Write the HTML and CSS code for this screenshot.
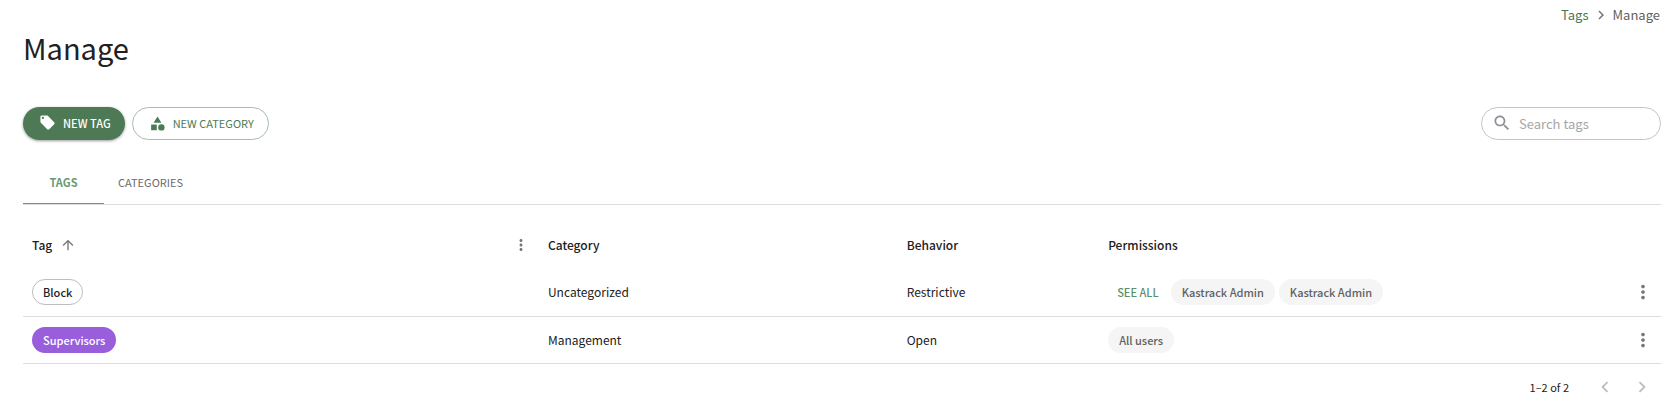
FILE: index.html
```
<!DOCTYPE html>
<html lang="en">
<head>
    <meta charset="UTF-8">
    <meta name="viewport" content="width=device-width, initial-scale=1.0">
    <title>Manage Tags</title>
    <link rel="stylesheet" href="styles.css">
</head>
<body>
    <div class="page">
        <nav class="breadcrumbs" aria-label="Breadcrumb">
            <a href="#tags">Tags</a>
            <svg class="icon icon-crumb" viewBox="0 0 24 24"><path d="M10 6 8.59 7.41 13.17 12l-4.58 4.59L10 18l6-6z"/></svg>
            <span>Manage</span>
        </nav>
        <h1>Manage</h1>

        <div class="toolbar">
            <button type="button" class="btn btn-primary">
                <svg class="icon" viewBox="0 0 24 24"><path d="m21.41 11.58-9-9C12.05 2.22 11.55 2 11 2H4c-1.1 0-2 .9-2 2v7c0 .55.22 1.05.59 1.42l9 9c.36.36.86.58 1.41.58s1.05-.22 1.41-.59l7-7c.37-.36.59-.86.59-1.41s-.23-1.06-.59-1.42M5.5 7C4.67 7 4 6.33 4 5.5S4.67 4 5.5 4 7 4.67 7 5.5 6.33 7 5.5 7"/></svg>
                NEW TAG
            </button>
            <button type="button" class="btn btn-outlined">
                <svg class="icon" viewBox="0 0 24 24"><path d="m12 2-5.5 9h11z"/><circle cx="17.5" cy="17.5" r="4.5"/><path d="M3 13.5h8v8H3z"/></svg>
                NEW CATEGORY
            </button>
            <label class="search">
                <svg class="icon icon-search" viewBox="0 0 24 24"><path d="M15.5 14h-.79l-.28-.27C15.41 12.59 16 11.11 16 9.5 16 5.91 13.09 3 9.5 3S3 5.91 3 9.5 5.91 16 9.5 16c1.61 0 3.09-.59 4.23-1.57l.27.28v.79l5 4.99L20.49 19zm-6 0C7.01 14 5 11.99 5 9.5S7.01 5 9.5 5 14 7.01 14 9.5 11.99 14 9.5 14"/></svg>
                <input type="text" placeholder="Search tags" aria-label="Search tags">
            </label>
        </div>

        <div class="tabs" role="tablist">
            <button type="button" class="tab active" role="tab" aria-selected="true">TAGS</button>
            <button type="button" class="tab" role="tab" aria-selected="false">CATEGORIES</button>
        </div>

        <table class="tags-table">
            <colgroup>
                <col class="col-tag">
                <col class="col-category">
                <col class="col-behavior">
                <col>
                <col class="col-actions">
            </colgroup>
            <thead>
                <tr>
                    <th>
                        <div class="th-sort">
                            <span>Tag</span>
                            <svg class="icon icon-sort" viewBox="0 0 24 24"><path d="m4 12 1.41 1.41L11 7.83V20h2V7.83l5.58 5.59L20 12l-8-8z"/></svg>
                            <button type="button" class="icon-btn th-menu" aria-label="Column menu">
                                <svg class="icon icon-column" viewBox="0 0 24 24"><path d="M12 8c1.1 0 2-.9 2-2s-.9-2-2-2-2 .9-2 2 .9 2 2 2m0 2c-1.1 0-2 .9-2 2s.9 2 2 2 2-.9 2-2-.9-2-2-2m0 6c-1.1 0-2 .9-2 2s.9 2 2 2 2-.9 2-2-.9-2-2-2"/></svg>
                            </button>
                        </div>
                    </th>
                    <th>Category</th>
                    <th>Behavior</th>
                    <th>Permissions</th>
                    <th></th>
                </tr>
            </thead>
            <tbody>
                <tr>
                    <td><div class="chips"><span class="chip chip-outlined">Block</span></div></td>
                    <td>Uncategorized</td>
                    <td>Restrictive</td>
                    <td>
                        <div class="chips">
                            <button type="button" class="see-all">SEE ALL</button>
                            <span class="chip">Kastrack Admin</span>
                            <span class="chip">Kastrack Admin</span>
                        </div>
                    </td>
                    <td>
                        <button type="button" class="icon-btn" aria-label="Row actions">
                            <svg class="icon icon-row" viewBox="0 0 24 24"><path d="M12 8c1.1 0 2-.9 2-2s-.9-2-2-2-2 .9-2 2 .9 2 2 2m0 2c-1.1 0-2 .9-2 2s.9 2 2 2 2-.9 2-2-.9-2-2-2m0 6c-1.1 0-2 .9-2 2s.9 2 2 2 2-.9 2-2-.9-2-2-2"/></svg>
                        </button>
                    </td>
                </tr>
                <tr>
                    <td><div class="chips"><span class="chip chip-purple">Supervisors</span></div></td>
                    <td>Management</td>
                    <td>Open</td>
                    <td><div class="chips"><span class="chip">All users</span></div></td>
                    <td>
                        <button type="button" class="icon-btn" aria-label="Row actions">
                            <svg class="icon icon-row" viewBox="0 0 24 24"><path d="M12 8c1.1 0 2-.9 2-2s-.9-2-2-2-2 .9-2 2 .9 2 2 2m0 2c-1.1 0-2 .9-2 2s.9 2 2 2 2-.9 2-2-.9-2-2-2m0 6c-1.1 0-2 .9-2 2s.9 2 2 2 2-.9 2-2-.9-2-2-2"/></svg>
                        </button>
                    </td>
                </tr>
            </tbody>
        </table>

        <div class="pagination">
            <span class="range">1–2 of 2</span>
            <button type="button" class="icon-btn page-btn" aria-label="Previous page" disabled>
                <svg class="icon icon-page" viewBox="0 0 24 24"><path d="M15.41 7.41 14 6l-6 6 6 6 1.41-1.41L10.83 12z"/></svg>
            </button>
            <button type="button" class="icon-btn page-btn" aria-label="Next page" disabled>
                <svg class="icon icon-page" viewBox="0 0 24 24"><path d="M10 6 8.59 7.41 13.17 12l-4.58 4.59L10 18l6-6z"/></svg>
            </button>
        </div>
    </div>
</body>
</html>
```
FILE: styles.css
```
* {
    box-sizing: border-box;
}
body {
    margin: 0;
    background: #fff;
    color: #212121;
    font-family: "Noto Sans CJK SC", "Noto Sans", sans-serif;
    font-size: 12px;
    line-height: 20px;
}
button, input {
    font-family: inherit;
}
button {
    padding: 0;
    border: 0;
    background: none;
    cursor: pointer;
}
.page {
    padding: 5px 15px 0 23px;
}
.icon {
    display: block;
    flex: none;
    fill: currentColor;
}
.breadcrumbs {
    display: flex;
    justify-content: flex-end;
    align-items: center;
    gap: 3px;
    padding-right: 1px;
    color: #616161;
    font-size: 13px;
}
.breadcrumbs a {
    color: #4b7652;
    text-decoration: none;
}
.icon-crumb {
    width: 18px;
    height: 18px;
    color: #757575;
}
h1 {
    margin: 1px 0 39px;
    font-size: 29px;
    font-weight: 400;
    line-height: 42px;
}

.toolbar {
    display: flex;
    align-items: center;
    gap: 7px;
}
.btn {
    display: flex;
    align-items: center;
    gap: 7px;
    height: 33px;
    border-radius: 17px;
    font-size: 11px;
}
.btn .icon {
    width: 17px;
    height: 17px;
}
.btn-primary {
    padding: 0 14px 2px 16px;
    background: #4d7a54;
    color: #fff;
    font-weight: 500;
    box-shadow: 0 1px 3px rgba(0, 0, 0, 0.4);
}
.btn-outlined {
    padding: 0 14px 1px 16px;
    border: 1px solid #a6bda9;
    color: #4d7a54;
}
.search {
    display: flex;
    align-items: center;
    gap: 7px;
    width: 180px;
    height: 33px;
    margin-left: auto;
    padding: 0 10px 1px;
    border: 1px solid #c4c4c4;
    border-radius: 17px;
    color: #8c9096;
}
.search input {
    width: 100%;
    min-width: 0;
    padding: 0;
    border: 0;
    outline: 0;
    background: none;
    font-size: 13px;
}
.search input::placeholder {
    color: #a6a6a6;
    opacity: 1;
}
.icon-search {
    width: 20px;
    height: 20px;
}

.tabs {
    display: flex;
    margin-top: 22px;
    border-bottom: 1px solid #dedede;
}
.tab {
    height: 42px;
    padding: 0 14px 1px;
    border-bottom: 1px solid transparent;
    color: #6b6b6b;
    font-size: 11px;
}
.tab.active {
    min-width: 81px;
    border-color: #6a9a73;
    color: #6a9a73;
    font-weight: 700;
}

.tags-table {
    width: 100%;
    margin-top: 17px;
    border-collapse: collapse;
    table-layout: fixed;
}
.col-tag {
    width: 31.5%;
}
.col-category {
    width: 21.9%;
}
.col-behavior {
    width: 12.3%;
}
.col-actions {
    width: 37px;
}
th, td {
    height: 47px;
    padding: 0 9px;
    text-align: left;
}
th {
    padding-bottom: 2px;
    font-weight: 500;
}
td {
    border-bottom: 1px solid #dedede;
}
th:last-child, td:last-child {
    padding: 0;
}
.th-sort {
    display: flex;
    align-items: center;
    gap: 8px;
}
.icon-sort {
    width: 16px;
    height: 16px;
    color: #757575;
}
.icon-btn {
    display: flex;
    align-items: center;
    justify-content: center;
    width: 37px;
    height: 37px;
    color: #757575;
}
.th-menu {
    width: 18px;
    height: 18px;
    margin-left: auto;
}
.icon-column {
    width: 18px;
    height: 18px;
}
.icon-row, .icon-page {
    width: 22px;
    height: 22px;
}
.chips {
    display: flex;
    align-items: center;
    gap: 4px;
}
.chip {
    display: flex;
    align-items: center;
    height: 26px;
    padding: 0 11px;
    border-radius: 13px;
    background: #f5f5f5;
    color: #616161;
    font-size: 11px;
    font-weight: 500;
}
.chip-outlined {
    padding: 0 10px;
    border: 1px solid #bdbdbd;
    background: #fff;
    color: #212121;
}
.chip-purple {
    background: #985edb;
    color: #fff;
}
.see-all {
    padding: 0 8px 0 9px;
    color: #5e9068;
    font-size: 11px;
    font-weight: 500;
}

.pagination {
    display: flex;
    align-items: center;
    justify-content: flex-end;
    height: 47px;
    padding-right: 1px;
    font-size: 11px;
}
.range {
    margin-right: 17px;
}
.page-btn {
    color: #bdbdbd;
}
```
